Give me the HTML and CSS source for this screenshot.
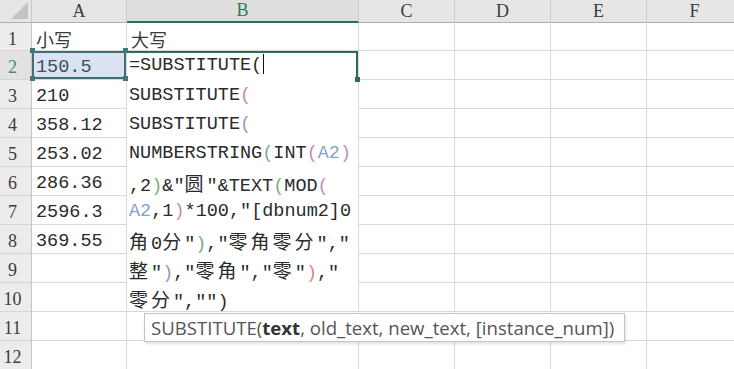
FILE: index.html
```html
<!DOCTYPE html>
<html lang="zh-CN">
<head>
    <meta charset="UTF-8">
    <title>SUBSTITUTE</title>
    <link rel="stylesheet" href="styles.css">
</head>
<body>
    <div class="page">
        <div class="sheet">
            <div class="corner"><span class="tri"></span></div>
            <div class="ch">A</div>
            <div class="ch on">B</div>
            <div class="ch">C</div>
            <div class="ch">D</div>
            <div class="ch">E</div>
            <div class="ch">F</div>

            <div class="rh">1</div>
            <div class="c"><span class="zh">小写</span></div>
            <div class="c"><span class="zh">大写</span></div>
            <div class="c"></div><div class="c"></div><div class="c"></div><div class="c"></div>

            <div class="rh on">2</div>
            <div class="c sel">150.5
                <span class="dot tl"></span><span class="dot tr"></span>
                <span class="dot bl"></span><span class="dot br"></span>
            </div>
            <div class="c"></div><div class="c"></div><div class="c"></div><div class="c"></div>

            <div class="rh">3</div>
            <div class="c">210</div>
            <div class="c"></div><div class="c"></div><div class="c"></div><div class="c"></div>

            <div class="rh">4</div>
            <div class="c">358.12</div>
            <div class="c"></div><div class="c"></div><div class="c"></div><div class="c"></div>

            <div class="rh">5</div>
            <div class="c">253.02</div>
            <div class="c"></div><div class="c"></div><div class="c"></div><div class="c"></div>

            <div class="rh">6</div>
            <div class="c">286.36</div>
            <div class="c"></div><div class="c"></div><div class="c"></div><div class="c"></div>

            <div class="rh">7</div>
            <div class="c">2596.3</div>
            <div class="c"></div><div class="c"></div><div class="c"></div><div class="c"></div>

            <div class="rh">8</div>
            <div class="c">369.55</div>
            <div class="c"></div><div class="c"></div><div class="c"></div><div class="c"></div>

            <div class="rh">9</div>
            <div class="c"></div>
            <div class="c"></div><div class="c"></div><div class="c"></div><div class="c"></div>

            <div class="rh">10</div>
            <div class="c"></div>
            <div class="c"></div><div class="c"></div><div class="c"></div><div class="c"></div>

            <div class="rh">11</div>
            <div class="c"></div><div class="c"></div>
            <div class="c"></div><div class="c"></div><div class="c"></div><div class="c"></div>

            <div class="rh">12</div>
            <div class="c"></div><div class="c"></div>
            <div class="c"></div><div class="c"></div><div class="c"></div><div class="c"></div>

            <!-- in-cell editor for B2, wraps down over B3:B10 -->
            <div class="editor">
                <div class="ln first">=SUBSTITUTE(<span class="caret"></span><span class="grip"></span></div>
                <div class="ln">SUBSTITUTE<span class="p2">(</span></div>
                <div class="ln">SUBSTITUTE<span class="p3">(</span></div>
                <div class="ln">NUMBERSTRING<span class="p4">(</span>INT<span class="p5">(</span><span class="ref">A2</span><span class="p5">)</span></div>
                <div class="ln">,2<span class="p4">)</span>&amp;"<span class="cj">圆</span>"&amp;TEXT<span class="p4">(</span>MOD<span class="p5">(</span></div>
                <div class="ln"><span class="ref">A2</span>,1<span class="p5">)</span>*100,"[dbnum2]0</div>
                <div class="ln"><span class="cj">角</span>0<span class="cj">分</span>"<span class="p4">)</span>,"<span class="cj">零角零分</span>","</div>
                <div class="ln"><span class="cj">整</span>"<span class="p3">)</span>,"<span class="cj">零角</span>","<span class="cj">零</span>"<span class="p2">)</span>,"</div>
                <div class="ln"><span class="cj">零分</span>","")</div>
            </div>
        </div>

        <div class="tip">SUBSTITUTE(<b>text</b>, old_text, new_text, [instance_num])</div>
    </div>
</body>
</html>
```

FILE: styles.css
```css
html, body {
    margin: 0;
    padding: 0;
    background: #ffffff;
    overflow: hidden;
}
.page {
    position: relative;
    width: 734px;
    height: 369px;
    overflow: hidden;
}
.sheet {
    display: grid;
    grid-template-columns: 32px 95px 232px 96px 96px 96px 96px;
    grid-template-rows: 23px 28px repeat(11, 29px);
    width: 743px;
    font-family: "Liberation Mono", "Noto Sans CJK SC", monospace;
    font-size: 18.5px;
    color: #2b2b2b;
}

/* headers */
.corner {
    position: relative;
    background: #e6e6e6;
    border-right: 1px solid #c9c9c9;
    border-bottom: 1px solid #b0b0b0;
}
.tri {
    position: absolute;
    right: 3px;
    bottom: 3px;
    width: 0;
    height: 0;
    border-left: 17px solid transparent;
    border-bottom: 17px solid #c4c4c4;
}
.ch {
    background: #e6e6e6;
    border-right: 1px solid #cdcdcd;
    border-bottom: 1px solid #b0b0b0;
    font-family: "Liberation Serif", serif;
    font-size: 18px;
    color: #3d3d3d;
    display: flex;
    align-items: center;
    justify-content: center;
}
.ch.on {
    background: #dedede;
    color: #2f7a55;
    border-bottom: 2px solid #2c7350;
}
.rh {
    background: #ececec;
    border-right: 1px solid #c6c6c6;
    border-bottom: 1px solid #d6d6d6;
    font-family: "Liberation Serif", serif;
    font-size: 18px;
    color: #3d3d3d;
    display: flex;
    align-items: center;
    justify-content: center;
    padding: 5px 6px 0 0;
}
.rh.on {
    color: #4f8a6c;
    background: #e2e2e2;
}

/* cells */
.c {
    border-right: 1px solid #d9d9d9;
    border-bottom: 1px solid #d9d9d9;
    display: flex;
    align-items: center;
    padding: 4px 0 0 4px;
    white-space: nowrap;
}
.zh {
    font-family: "Noto Sans CJK SC", sans-serif;
    font-size: 18px;
    color: #3a3a3a;
}
.c.sel {
    position: relative;
    background: #dae3f1;
    color: #3c4f66;
    box-shadow: inset 0 0 0 2px #426f73;
}
.dot {
    position: absolute;
    width: 5px;
    height: 5px;
    background: #3d7a7c;
}
.dot.tl { left: -2px; top: -3px; }
.dot.tr { right: -2px; top: -3px; }
.dot.bl { left: -2px; bottom: -2px; }
.dot.br { right: -2px; bottom: -2px; }

/* editor */
.editor {
    grid-column: 3;
    grid-row: 3 / 12;
    background: #ffffff;
    border-right: 1px solid #d9d9d9;
    border-bottom: 1px solid #d9d9d9;
    white-space: nowrap;
}
.ln {
    height: 29px;
    line-height: 29px;
    padding: 0 0 0 2px;
    box-sizing: border-box;
    padding-top: 4px;
    line-height: 25px;
}
.ln.first {
    position: relative;
    height: 28px;
    line-height: 26px;
    padding-top: 2px;
    box-shadow: inset 0 2px 0 #2c6e4f, inset -2px 0 0 #2c6e4f;
}
.caret {
    display: inline-block;
    width: 1px;
    height: 20px;
    background: #111;
    vertical-align: -4px;
    margin-left: 1px;
}
.grip {
    position: absolute;
    right: -2px;
    bottom: -3px;
    width: 5px;
    height: 5px;
    background: #2c6e4f;
}
.cj {
    font-family: "Noto Sans CJK SC", sans-serif;
    font-size: 19px;
    letter-spacing: 3px;
}
.p2 { color: #cf8a8a; }
.p3 { color: #a98bc6; }
.p4 { color: #77ad7f; }
.p5 { color: #c58ab9; }
.ref { color: #86a2cc; }

/* function tooltip */
.tip {
    position: absolute;
    left: 144px;
    top: 313px;
    width: 481px;
    height: 29px;
    box-sizing: border-box;
    background: #ffffff;
    border: 1px solid #c3c3c3;
    box-shadow: 1px 2px 3px rgba(0, 0, 0, 0.12);
    font-family: "Open Sans", sans-serif;
    font-size: 18.6px;
    line-height: 27px;
    color: #555555;
    padding-left: 6px;
    white-space: nowrap;
}
.tip b {
    color: #333333;
    font-weight: 700;
}
```
